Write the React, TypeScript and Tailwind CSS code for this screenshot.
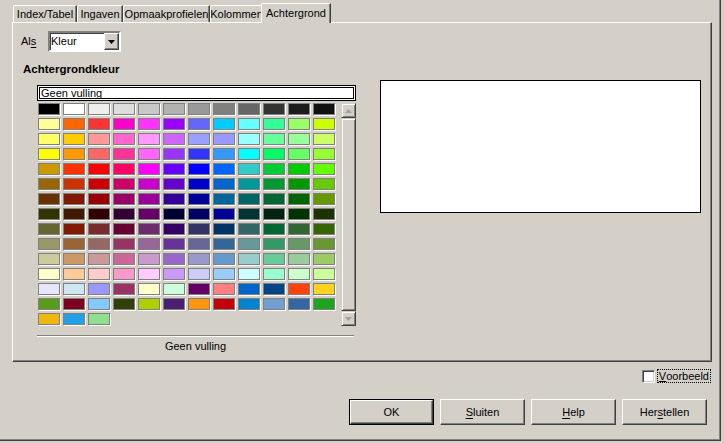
import React from "react";

const rows: string[][] = [
  ["#000000", "#ffffff", "#eeeeee", "#dddddd", "#c8c8c8", "#b2b2b2", "#999999", "#808080", "#666666", "#333333", "#1c1c1c", "#111111"],
  ["#ffff99", "#ff6600", "#ff3333", "#ff00cc", "#ff33ff", "#9900ff", "#6666ff", "#00ccff", "#66ffff", "#33ff99", "#99ff66", "#ccff00"],
  ["#ffff66", "#ffcc00", "#ff9999", "#ff66cc", "#ff99ff", "#cc66ff", "#99a0ff", "#9999ff", "#99ffff", "#66ff99", "#99ff99", "#ccff66"],
  ["#ffff00", "#ff9900", "#ff6666", "#ff3399", "#ff66ff", "#9933ff", "#3333ff", "#3399ff", "#00ffff", "#00ff66", "#66ff66", "#99ff33"],
  ["#cc9900", "#ff3300", "#ff0000", "#ff0066", "#ff00ff", "#6600ff", "#0000ff", "#0066ff", "#33cccc", "#00cc33", "#00cc00", "#66ff00"],
  ["#996600", "#cc3300", "#cc0000", "#cc0066", "#cc00cc", "#6600cc", "#0000cc", "#0066cc", "#009999", "#009933", "#009900", "#66cc00"],
  ["#663300", "#801900", "#990000", "#990066", "#990099", "#330099", "#000099", "#006699", "#006666", "#006633", "#006600", "#669900"],
  ["#333300", "#401a00", "#330000", "#330033", "#660066", "#000033", "#000066", "#000099", "#003333", "#002211", "#003300", "#1a3300"],
  ["#666633", "#801a00", "#7a2b2b", "#660033", "#6b2d6b", "#330066", "#333366", "#003366", "#336666", "#006633", "#336633", "#336600"],
  ["#999966", "#996633", "#996666", "#993366", "#996699", "#663399", "#666699", "#336699", "#669999", "#339966", "#669966", "#669933"],
  ["#cccc99", "#cc9966", "#cc9999", "#cc6699", "#cc99cc", "#9966cc", "#9999cc", "#6699cc", "#99cccc", "#66cc99", "#99cc99", "#99cc66"],
  ["#ffffcc", "#ffcc99", "#ffcccc", "#ff99cc", "#ffccff", "#cc99ff", "#ccccff", "#99ccff", "#ccffff", "#99ffcc", "#ccffcc", "#ccff99"],
  ["#e6e6ff", "#cfe7f5", "#9999ff", "#993366", "#ffffcc", "#ccffdd", "#660066", "#ff8080", "#0066cc", "#004586", "#ff420e", "#ffd320"],
  ["#579d1c", "#7e0021", "#83caff", "#314004", "#aecf00", "#4b1f6f", "#ff950e", "#c5000b", "#0084d1", "#729fcf", "#3465a4", "#1ea41e"],
  ["#f0b70f", "#22a0e6", "#8ee08e"],
];

const colors = rows.flat();

function ArrowUp() {
  return (
    <svg width="7" height="4" viewBox="0 0 7 4">
      <polygon points="3.5,0 7,4 0,4" fill="#a0a0a0" />
    </svg>
  );
}

function ArrowDown({ color }: { color: string }) {
  return (
    <svg width="7" height="4" viewBox="0 0 7 4">
      <polygon points="0,0 7,0 3.5,4" fill={color} />
    </svg>
  );
}

export default function App() {
  return (
    <div className="w-[724px] h-[443px] bg-[#d4d0c8] overflow-hidden font-['Liberation_Sans',Arial,sans-serif] text-[11px] text-black">
      <div className="w-[721px] h-[441px] pl-[12px] pt-[3px] shadow-[inset_-1px_-1px_0_#404040,inset_-2px_-2px_0_#808080]">
        {/* Tabs */}
        <div className="flex items-end h-[19px] pl-[1px]">
          <div className="h-[17px] w-[64px] flex items-center justify-center border-t border-l border-r border-t-white border-l-white border-r-[#404040] rounded-tl-[2px] shadow-[inset_-1px_0_0_#808080]">
            Index/Tabel
          </div>
          <div className="h-[17px] w-[46px] flex items-center justify-center border-t border-l border-r border-t-white border-l-white border-r-[#404040] rounded-tl-[2px] shadow-[inset_-1px_0_0_#808080]">
            Ingaven
          </div>
          <div className="h-[17px] w-[87px] flex items-center justify-center border-t border-l border-r border-t-white border-l-white border-r-[#404040] rounded-tl-[2px] shadow-[inset_-1px_0_0_#808080]">
            Opmaakprofielen
          </div>
          <div className="h-[17px] w-[53px] flex items-center justify-center border-t border-l border-r border-t-white border-l-white border-r-[#404040] rounded-tl-[2px] shadow-[inset_-1px_0_0_#808080]">
            Kolommen
          </div>
          <div className="relative z-10 -ml-[2px] mb-[-1px] h-[20px] w-[70px] bg-[#d4d0c8] flex items-center justify-center pb-[1px] border-t border-l border-r border-t-white border-l-white border-r-[#404040] rounded-tl-[2px] shadow-[inset_-1px_0_0_#808080]">
            Achtergrond
          </div>
        </div>

        {/* Panel */}
        <div className="w-[700px] h-[340px] border border-t-white border-l-white border-r-[#404040] border-b-[#404040] shadow-[inset_-1px_-1px_0_#808080]">
          <div className="flex items-center mt-[8px] ml-[8px] h-[21px]">
            <span className="w-[27px]">
              Al<span className="underline underline-offset-2">s</span>
            </span>
            <div className="w-[73px] h-[21px] flex items-center bg-white border-2 border-t-[#808080] border-l-[#808080] border-b-white border-r-white">
              <div className="flex-1 h-full flex items-center shadow-[inset_1px_1px_0_#404040] pl-[1px]">Kleur</div>
              <div className="w-[15px] h-full flex items-center justify-center bg-[#d4d0c8] border border-t-white border-l-white border-r-[#404040] border-b-[#404040] shadow-[inset_-1px_-1px_0_#808080]">
                <ArrowDown color="#000000" />
              </div>
            </div>
          </div>

          <div className="mt-[10px] ml-[10px] h-[14px] leading-[14px] font-bold text-[11.5px]">Achtergrondkleur</div>

          <div className="flex ml-[24px]">
            {/* Left column */}
            <div className="w-[319px] mt-[9px]">
              <div className="h-[16px] border border-black p-px bg-white">
                <div className="h-full border border-black pl-[1px] leading-[11px] flex items-center">Geen vulling</div>
              </div>

              <div className="flex mt-[2px]">
                <div className="ml-[1px] grid grid-cols-[repeat(12,22px)] gap-[3px] content-start h-[223px]">
                  {colors.map((c, i) => (
                    <div
                      key={i}
                      className="h-[12px] border border-[#808080] shadow-[1px_1px_0_#ffffff]"
                      style={{ background: c }}
                    />
                  ))}
                </div>

                <div className="ml-[6px] w-[15px] h-[223px] flex flex-col">
                  <div className="h-[15px] flex items-center justify-center border border-t-[#d4d0c8] border-l-[#d4d0c8] border-r-[#404040] border-b-[#404040] shadow-[inset_1px_1px_0_#ffffff,inset_-1px_-1px_0_#808080]">
                    <ArrowUp />
                  </div>
                  <div className="flex-1 border border-t-[#d4d0c8] border-l-[#d4d0c8] border-r-[#404040] border-b-[#404040] shadow-[inset_1px_1px_0_#ffffff,inset_-1px_-1px_0_#808080]" />
                  <div className="h-[15px] flex items-center justify-center border border-t-[#d4d0c8] border-l-[#d4d0c8] border-r-[#404040] border-b-[#404040] shadow-[inset_1px_1px_0_#ffffff,inset_-1px_-1px_0_#808080]">
                    <ArrowDown color="#a0a0a0" />
                  </div>
                </div>
              </div>

              <div className="mt-[9px] w-[317px] border-t border-b border-t-[#808080] border-b-white" />
              <div className="mt-[3px] w-[317px] text-center leading-[13px]">Geen vulling</div>
            </div>

            {/* Preview */}
            <div className="ml-[24px] mt-[4px] w-[321px] h-[133px] bg-white border border-black" />
          </div>
        </div>

        {/* Voorbeeld checkbox */}
        <div className="mt-[7px] h-[14px] flex justify-end items-center pr-[10px] gap-[2px]">
          <div className="w-[13px] h-[13px] bg-white border border-t-[#808080] border-l-[#808080] border-b-white border-r-white shadow-[inset_1px_1px_0_#404040,inset_-1px_-1px_0_#d4d0c8]" />
          <div className="h-[14px] px-[1px] flex items-center border border-dotted border-black leading-[12px]">
            <span className="underline underline-offset-1">V</span>oorbeeld
          </div>
        </div>

        {/* Buttons */}
        <div className="mt-[16px] flex justify-end pr-[14px] gap-[6px]">
          <div className="w-[85px] h-[26px] border border-black">
            <div className="h-full flex items-center justify-center border border-t-white border-l-white border-r-[#404040] border-b-[#404040] shadow-[inset_-1px_-1px_0_#808080]">
              OK
            </div>
          </div>
          <div className="w-[85px] h-[26px] flex items-center justify-center border border-t-white border-l-white border-r-[#404040] border-b-[#404040] shadow-[inset_-1px_-1px_0_#808080]">
            <span>
              <span className="underline underline-offset-2">S</span>luiten
            </span>
          </div>
          <div className="w-[85px] h-[26px] flex items-center justify-center border border-t-white border-l-white border-r-[#404040] border-b-[#404040] shadow-[inset_-1px_-1px_0_#808080]">
            <span>
              <span className="underline underline-offset-2">H</span>elp
            </span>
          </div>
          <div className="w-[85px] h-[26px] flex items-center justify-center border border-t-white border-l-white border-r-[#404040] border-b-[#404040] shadow-[inset_-1px_-1px_0_#808080]">
            <span>
              Her<span className="underline underline-offset-2">s</span>tellen
            </span>
          </div>
        </div>
      </div>
    </div>
  );
}
